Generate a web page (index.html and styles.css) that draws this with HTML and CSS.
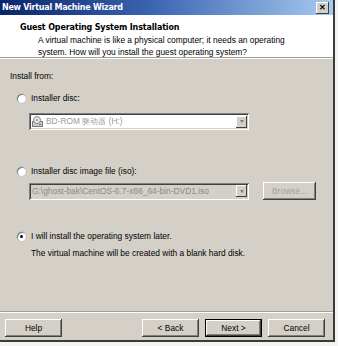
FILE: index.html
```html
<!DOCTYPE html>
<html lang="en">
<head>
    <meta charset="UTF-8">
    <title>New Virtual Machine Wizard</title>
    <link rel="stylesheet" href="styles.css">
</head>
<body>
<div class="window">
    <div class="titlebar">
        <span class="title">New Virtual Machine Wizard</span>
        <span class="close">&#x2715;</span>
    </div>

    <div class="header">
        <h1>Guest Operating System Installation</h1>
        <p>A virtual machine is like a physical computer; it needs an operating<br>system. How will you install the guest operating system?</p>
    </div>

    <div class="content">
        <p class="label">Install from:</p>

        <div class="option first">
            <span class="radio"></span>
            <span>Installer disc:</span>
        </div>
        <div class="field-row first">
            <div class="combo white">
                <svg class="drive" width="11" height="11" viewBox="0 0 11 11">
                    <rect x="0.5" y="5.5" width="10" height="5" fill="#c8c8c8" stroke="#7a7a7a"/>
                    <circle cx="5" cy="4" r="3.5" fill="#e8e8e8" stroke="#8a8a8a"/>
                    <circle cx="5" cy="4" r="1" fill="#8a8a8a"/>
                    <rect x="7" y="8" width="2" height="1" fill="#5a8a3a"/>
                </svg>
                <span class="combo-text">BD-ROM 驱动器 (H:)</span>
                <span class="drop"></span>
            </div>
        </div>

        <div class="option second">
            <span class="radio"></span>
            <span>Installer disc image file (iso):</span>
        </div>
        <div class="field-row second">
            <div class="combo grey">
                <span class="combo-text">G:\ghost-bak\CentOS-6.7-x86_64-bin-DVD1.iso</span>
                <span class="drop"></span>
            </div>
            <button class="btn browse" disabled>Browse...</button>
        </div>

        <div class="option third">
            <span class="radio checked"></span>
            <span>I will install the operating system later.</span>
        </div>
        <p class="note">The virtual machine will be created with a blank hard disk.</p>
    </div>

    <div class="footer">
        <button class="btn">Help</button>
        <div class="nav">
            <button class="btn">&lt; Back</button>
            <button class="btn default">Next &gt;</button>
            <button class="btn">Cancel</button>
        </div>
    </div>
</div>
</body>
</html>
```

FILE: styles.css
```css
* {
    margin: 0;
    padding: 0;
    box-sizing: border-box;
}

body {
    background: #f4f4f4;
    font-family: 'Liberation Sans', Arial, sans-serif;
    font-size: 8.4px;
    color: #000;
}

.window {
    width: 335px;
    height: 342px;
    background: #d4d0c8;
    border-right: 2px solid #3a3a3a;
    border-bottom: 2px solid #3a3a3a;
    display: flex;
    flex-direction: column;
}

.titlebar {
    height: 15px;
    background: linear-gradient(to right, #0a246a, #3a64b0 45%, #a6caf0);
    display: flex;
    align-items: center;
    justify-content: space-between;
    padding: 0 4px 0 2px;
}

.title {
    color: #fff;
    font-family: 'DejaVu Sans', Verdana, sans-serif;
    font-weight: bold;
    font-size: 8px;
    letter-spacing: -0.25px;
}

.close {
    width: 13px;
    height: 12px;
    background: #d4d0c8;
    font-size: 8px;
    font-weight: bold;
    line-height: 12px;
    text-align: center;
    box-shadow: inset -1px -1px #404040, inset 1px 1px #fff;
}

.header {
    height: 43px;
    background: #fff;
    border-bottom: 1px solid #a0a0a0;
    box-shadow: 0 1px #fff;
    padding: 7px 0 0 20px;
}

.header h1 {
    font-family: 'DejaVu Sans', Verdana, sans-serif;
    font-size: 8px;
    font-weight: bold;
    letter-spacing: -0.15px;
    line-height: 11px;
    margin-bottom: 1px;
}

.header p {
    padding-left: 18px;
    line-height: 12px;
}

.content {
    flex: 1;
    padding: 12px 0 0 10px;
    border-bottom: 1px solid #a0a0a0;
}

.label {
    line-height: 12px;
}

.option {
    display: flex;
    align-items: center;
    gap: 5px;
    padding-left: 7px;
    line-height: 12px;
}

.option.first {
    margin-top: 10px;
}

.option.second {
    margin-top: 35px;
}

.option.third {
    margin-top: 30px;
}

.radio {
    width: 9px;
    height: 9px;
    border-radius: 50%;
    background: #fff;
    box-shadow: inset 1px 1px #808080, 0 0 0 0.5px #b0b0b0;
    display: flex;
    align-items: center;
    justify-content: center;
}

.radio.checked::after {
    content: '';
    width: 3px;
    height: 3px;
    border-radius: 50%;
    background: #000;
}

.field-row {
    display: flex;
    align-items: center;
    gap: 14px;
    padding-left: 19px;
}

.field-row.first {
    margin-top: 9px;
}

.field-row.second {
    margin-top: 5px;
}

.combo {
    width: 220px;
    height: 17px;
    display: flex;
    align-items: center;
    padding: 2px 2px 2px 3px;
    box-shadow: inset 1px 1px #808080, inset -1px -1px #fff, inset 2px 2px #404040, inset -2px -2px #d4d0c8;
    color: #9a9a9a;
}

.combo.white {
    background: #fff;
}

.combo.grey {
    background: #d4d0c8;
    color: #8a8a8a;
}

.drive {
    margin-right: 3px;
}

.combo-text {
    flex: 1;
    white-space: nowrap;
}

.drop {
    width: 11px;
    height: 12px;
    background: #d4d0c8;
    box-shadow: inset -1px -1px #404040, inset 1px 1px #fff;
    display: flex;
    align-items: center;
    justify-content: center;
}

.drop::after {
    content: '';
    border-left: 2.5px solid transparent;
    border-right: 2.5px solid transparent;
    border-top: 3px solid #808080;
}

.note {
    padding-left: 21px;
    margin-top: 5px;
    line-height: 12px;
}

.btn {
    width: 57px;
    height: 18px;
    background: #d4d0c8;
    border: none;
    font-family: 'Liberation Sans', Arial, sans-serif;
    font-size: 8.4px;
    color: #000;
    box-shadow: inset -1px -1px #404040, inset 1px 1px #fff, inset -2px -2px #808080;
}

.btn.browse {
    width: 53px;
    color: #a0a0a0;
}

.btn.default {
    box-shadow: inset 0 0 0 1px #000, inset -2px -2px #404040, inset 2px 2px #fff, inset -3px -3px #808080;
}

.footer {
    height: 28px;
    border-top: 1px solid #fff;
    display: flex;
    align-items: flex-start;
    justify-content: space-between;
    padding: 6px 8px 0 5px;
}

.nav {
    display: flex;
    gap: 6px;
}
```
